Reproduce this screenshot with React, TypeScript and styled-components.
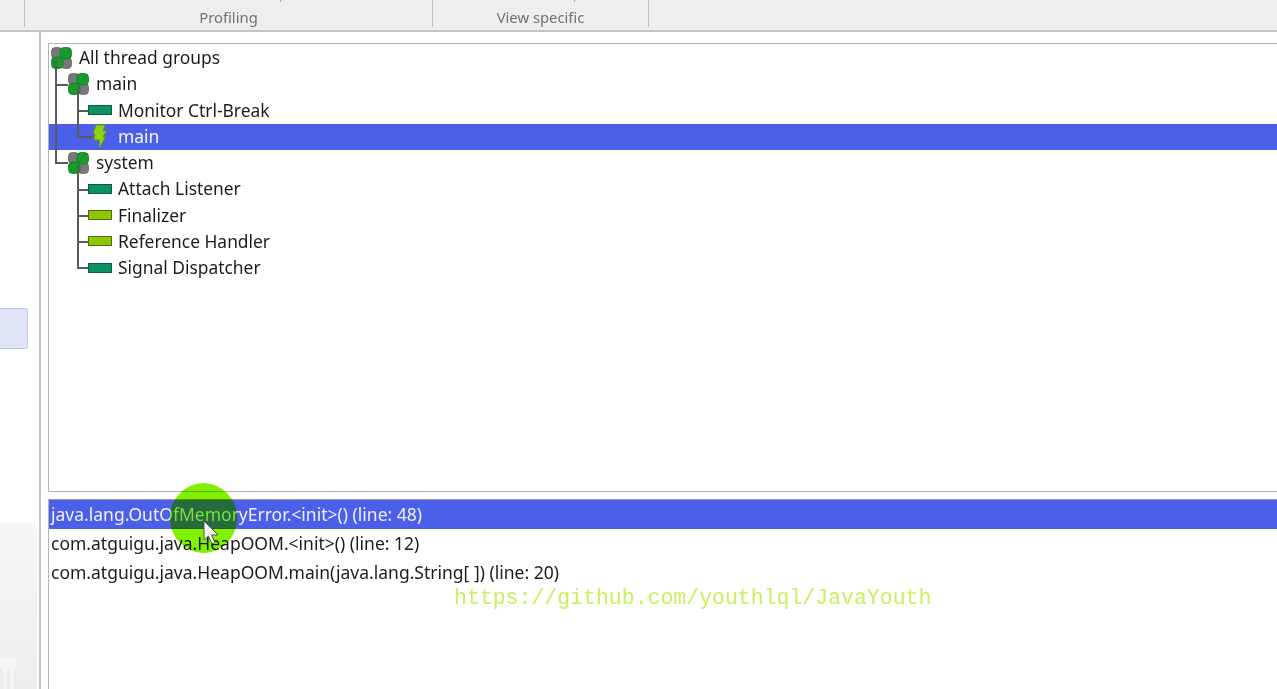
import React from "react";
import styled, { createGlobalStyle } from "styled-components";

const Global = createGlobalStyle`
  html, body { margin: 0; padding: 0; height: 100%; background: #fff; overflow: hidden; }
  #root { height: 100%; }
`;

const Page = styled.div`
  position: relative;
  width: 1277px;
  height: 689px;
  display: flex;
  flex-direction: column;
  overflow: hidden;
  font-family: "Noto Sans", "Open Sans", sans-serif;
  color: #1c1c1c;
  filter: blur(0.35px);
`;

const Toolbar = styled.div`
  height: 30px;
  flex: none;
  display: flex;
  background: #eeeeee;
  border-bottom: 2px solid #c4c4c4;
`;

const ToolGroup = styled.div<{ $w: number }>`
  position: relative;
  width: ${(p) => p.$w}px;
  height: 27px;
  flex: none;
  border-right: 1px solid #c2c2c2;
  box-sizing: border-box;
  display: flex;
  align-items: flex-end;
  justify-content: center;
  font-size: 14.8px;
  line-height: 20px;
  color: #6f7174;
`;

const Tick = styled.span<{ $x: number }>`
  position: absolute;
  top: 0;
  left: ${(p) => p.$x}px;
  width: 1px;
  height: 2px;
  background: #a8a8a8;
`;

const Body = styled.div`
  flex: 1;
  display: flex;
  min-height: 0;
`;

const Sidebar = styled.div`
  width: 39px;
  flex: none;
  border-right: 2px solid #c4c4c4;
  display: flex;
  flex-direction: column;
  padding-top: 276px;
`;

const SideItem = styled.div`
  width: 28px;
  height: 41px;
  box-sizing: border-box;
  background: #e0e4f7;
  border: 1px solid #bcc3ee;
  border-left: none;
  border-radius: 0 3px 3px 0;
  flex: none;
`;

const SideShade = styled.div`
  margin-top: 174px;
  flex: 1;
  margin-right: 2px;
  background: linear-gradient(#f6f6f6, #ededed);
  display: flex;
  flex-direction: column;
  justify-content: flex-end;
`;

const ShadeMark = styled.div`
  width: 16px;
  height: 31px;
  box-sizing: border-box;
  border-top: 10px solid #f6f6f6;
  background: repeating-linear-gradient(90deg, #ededed 0 3px, #f5f5f5 3px 7px);
`;

const Main = styled.div`
  flex: 1;
  display: flex;
  flex-direction: column;
  padding: 11px 0 0 7px;
  min-width: 0;
  gap: 7px;
`;

const TreePanel = styled.div`
  height: 449px;
  flex: none;
  box-sizing: border-box;
  border: 1px solid #b4b4b4;
  border-right: none;
  padding-top: 1px;
`;

const TreeRow = styled.div<{ $depth: number; $selected?: boolean }>`
  position: relative;
  height: 26.25px;
  box-sizing: border-box;
  padding-bottom: 1px;
  display: flex;
  align-items: center;
  gap: 6px;
  padding-left: ${(p) => 2 + p.$depth * 17}px;
  font-size: 17.4px;
  white-space: nowrap;
  color: ${(p) => (p.$selected ? "#f4f6ff" : "#1c1c1c")};
  background: ${(p) => (p.$selected ? "#4c5fe8" : "transparent")};
`;

const TreeLabel = styled.span`
  margin-bottom: 1px;
`;

const Elbow = styled.span<{ $x: number; $w: number; $up: number }>`
  position: absolute;
  left: ${(p) => p.$x}px;
  bottom: 12px;
  width: ${(p) => p.$w}px;
  height: ${(p) => p.$up}px;
  border-left: 2px solid #5a5a5a;
  border-bottom: 2px solid #5a5a5a;
  box-sizing: border-box;
`;

const LeafIcon = styled.span`
  width: 44px;
  flex: none;
  display: flex;
  justify-content: flex-end;
  align-items: center;
`;

const GroupSlot = styled.span`
  width: 21px;
  height: 22px;
  flex: none;
  display: flex;
  margin-right: 1px;
`;

const ThreadBar = styled.span<{ $live?: boolean }>`
  width: 24px;
  height: 10px;
  box-sizing: border-box;
  flex: none;
  border: 1.5px solid ${(p) => (p.$live ? "#4f6b12" : "#145a42")};
  background: ${(p) => (p.$live ? "#8fc800" : "#0a9463")};
`;

const BoltSlot = styled.span`
  display: flex;
  margin-right: 5px;
`;

const CallPanel = styled.div`
  flex: 1;
  border-left: 1px solid #b4b4b4;
  border-top: 1px solid #9a9a9a;
`;

const CallRow = styled.div<{ $selected?: boolean }>`
  height: 29px;
  box-sizing: border-box;
  padding-bottom: 2px;
  display: flex;
  align-items: center;
  padding-left: 2px;
  font-size: 17.5px;
  white-space: nowrap;
  color: ${(p) => (p.$selected ? "#eef0ff" : "#1c1c1c")};
  background: ${(p) => (p.$selected ? "#4c5fe8" : "transparent")};
`;

const Halo = styled.div`
  position: absolute;
  left: 170px;
  top: 483px;
  width: 67px;
  height: 70px;
  border-radius: 50%;
  background: #80f200;
  mix-blend-mode: multiply;
`;

const HaloBand = styled.div`
  position: absolute;
  left: 170px;
  top: 483px;
  width: 67px;
  height: 70px;
  border-radius: 50%;
  background: linear-gradient(transparent 17px, #0a6b3c 17px 45px, transparent 45px);
  mix-blend-mode: lighten;
`;

const Cursor = styled.svg`
  position: absolute;
  left: 203px;
  top: 520px;
`;

const Watermark = styled.div`
  position: absolute;
  left: 454px;
  top: 585px;
  font-family: "Liberation Mono", monospace;
  font-size: 21.5px;
  line-height: 26px;
  white-space: nowrap;
  color: #c8f060;
`;

const GroupIcon = () => (
  <svg width="21" height="22" viewBox="0 0 21 22">
    <rect x="0.5" y="0.5" width="10.5" height="11" rx="3.8" fill="#787878" stroke="#626262" strokeWidth="0.8" />
    <rect x="10" y="10.5" width="10.5" height="11" rx="3.8" fill="#787878" stroke="#626262" strokeWidth="0.8" />
    <rect x="9" y="0.5" width="11.5" height="11.5" rx="4" fill="#169c2c" stroke="#0f7a2a" strokeWidth="0.8" />
    <rect x="0.5" y="10" width="11.5" height="11.5" rx="4" fill="#169c2c" stroke="#0f7a2a" strokeWidth="0.8" />
  </svg>
);

const BoltIcon = () => (
  <svg width="15" height="24" viewBox="0 0 15 24">
    <path
      d="M4 1 L13 1 L11 7 L14.5 7 L11 13 L13.5 13 L8 23 L7 23 L7.5 16 L2 16 L3 10 L1 10 Z"
      fill="#8ed40c"
      stroke="#6d8f2a"
      strokeWidth="1"
      strokeLinejoin="round"
    />
  </svg>
);

type Node = {
  label: string;
  depth: number;
  kind: "group" | "thread" | "live" | "bolt";
  elbow?: [number, number, number];
  selected?: boolean;
};

const nodes: Node[] = [
  { label: "All thread groups", depth: 0, kind: "group" },
  { label: "main", depth: 1, kind: "group", elbow: [6, 13, 26] },
  { label: "Monitor Ctrl-Break", depth: 1, kind: "thread", elbow: [28, 11, 26] },
  { label: "main", depth: 1, kind: "bolt", selected: true, elbow: [28, 15, 40] },
  { label: "system", depth: 1, kind: "group", elbow: [6, 13, 92] },
  { label: "Attach Listener", depth: 1, kind: "thread", elbow: [28, 11, 26] },
  { label: "Finalizer", depth: 1, kind: "live", elbow: [28, 11, 26] },
  { label: "Reference Handler", depth: 1, kind: "live", elbow: [28, 11, 26] },
  { label: "Signal Dispatcher", depth: 1, kind: "thread", elbow: [28, 11, 26] },
];

const calls = [
  "java.lang.OutOfMemoryError.<init>() (line: 48)",
  "com.atguigu.java.HeapOOM.<init>() (line: 12)",
  "com.atguigu.java.HeapOOM.main(java.lang.String[ ]) (line: 20)",
];

export default function App() {
  return (
    <Page>
      <Global />
      <Toolbar>
        <ToolGroup $w={25} />
        <ToolGroup $w={408}>
          <Tick $x={255} />
          Profiling
        </ToolGroup>
        <ToolGroup $w={216}>
          <Tick $x={141} />
          View specific
        </ToolGroup>
      </Toolbar>
      <Body>
        <Sidebar>
          <SideItem />
          <SideShade>
            <ShadeMark />
          </SideShade>
        </Sidebar>
        <Main>
          <TreePanel>
            {nodes.map((n, i) => (
              <TreeRow key={i} $depth={n.depth} $selected={n.selected}>
                {n.elbow && <Elbow $x={n.elbow[0]} $w={n.elbow[1]} $up={n.elbow[2]} />}
                {n.kind === "group" ? (
                  <GroupSlot>
                    <GroupIcon />
                  </GroupSlot>
                ) : (
                  <LeafIcon>
                    {n.kind === "bolt" ? (
                      <BoltSlot>
                        <BoltIcon />
                      </BoltSlot>
                    ) : (
                      <ThreadBar $live={n.kind === "live"} />
                    )}
                  </LeafIcon>
                )}
                <TreeLabel>{n.label}</TreeLabel>
              </TreeRow>
            ))}
          </TreePanel>
          <CallPanel>
            {calls.map((c, i) => (
              <CallRow key={i} $selected={i === 0}>
                {c}
              </CallRow>
            ))}
          </CallPanel>
        </Main>
      </Body>
      <Halo />
      <HaloBand />
      <Cursor width="18" height="26" viewBox="0 0 18 26">
        <path d="M1 1 L1 20 L5.5 16 L9 24 L12 22.5 L8.5 15 L15 15 Z" fill="#f4f4f4" stroke="#555" strokeWidth="1" />
      </Cursor>
      <Watermark>https://github.com/youthlql/JavaYouth</Watermark>
    </Page>
  );
}
